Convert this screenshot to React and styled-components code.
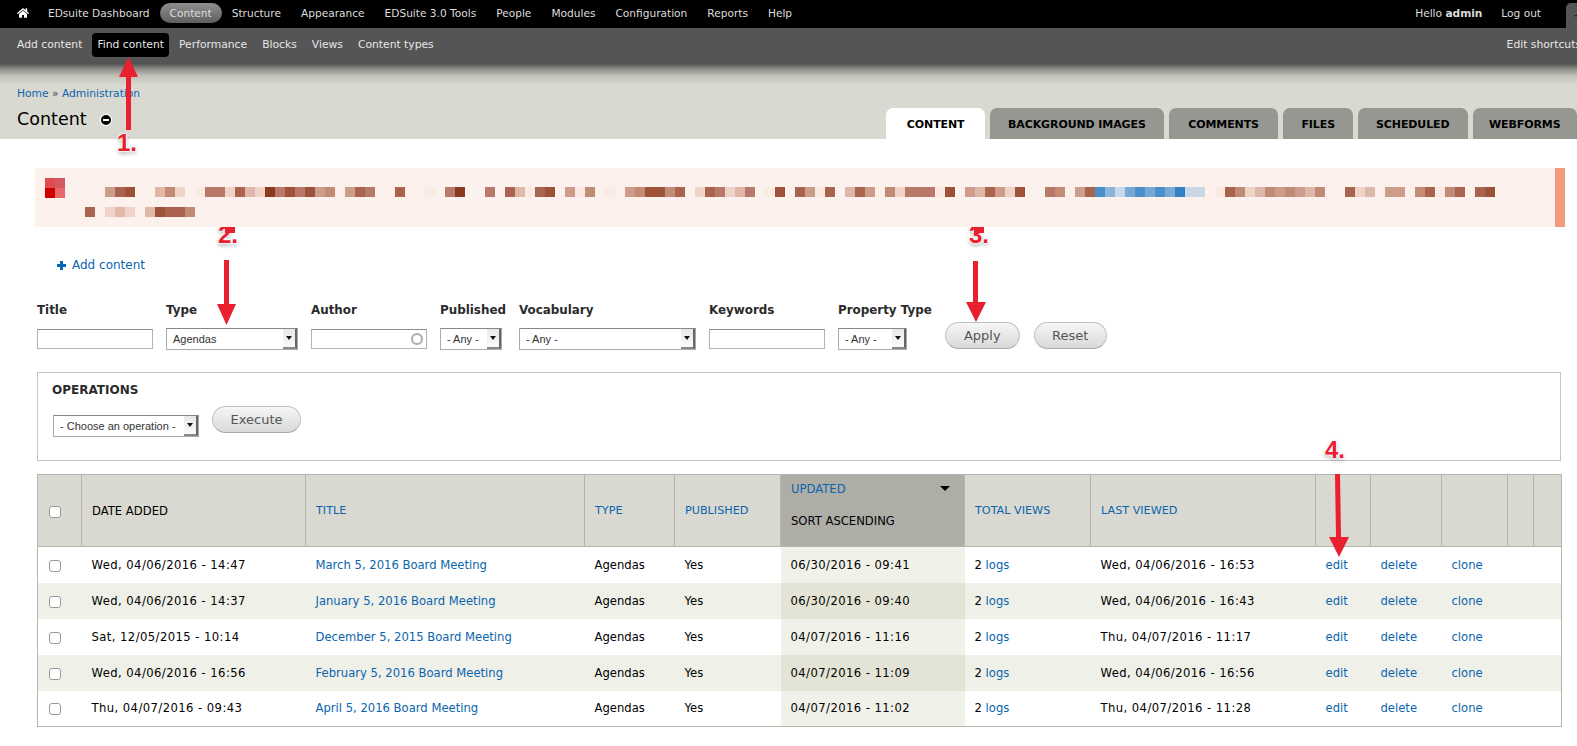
import React from "react";
import styled, { createGlobalStyle } from "styled-components";
import { FaHome } from "react-icons/fa";

const GlobalStyle = createGlobalStyle`
  html, body {
    margin: 0;
    padding: 0;
    background: #fff;
  }
  body {
    font-family: "DejaVu Sans", sans-serif;
    font-size: 10.6px;
    color: #000;
  }
`;

const Page = styled.div`
  position: relative;
  width: 1577px;
  height: 746px;
  overflow: hidden;
`;

const TopBar = styled.div`
  box-sizing: border-box;
  height: 28px;
  padding-bottom: 2px;
  background: #000;
  display: flex;
  align-items: center;
  justify-content: space-between;
  color: #ddd;
`;

const NavList = styled.div`
  display: flex;
  align-items: center;
`;

const HomeLink = styled.div`
  width: 48px;
  padding-left: 17px;
  box-sizing: border-box;
  display: flex;
  color: #fff;
  font-size: 12px;
`;

const NavItem = styled.span`
  height: 20px;
  line-height: 20px;
  padding: 0 ${(p) => (p.$first ? "10px 0 0" : "10px")};
  border-radius: 10px;
  white-space: nowrap;
  background: ${(p) => (p.$active ? "linear-gradient(#8e8e8e, #5f5f5f)" : "none")};
`;

const UserBox = styled.div`
  display: flex;
  align-items: center;
  height: 28px;
`;

const Hello = styled.span`
  margin-right: 19px;
`;

const Logout = styled.span`
  margin-right: 25px;
`;

const ShortcutToggle = styled.div`
  width: 11px;
  height: 25px;
  margin-top: 5px;
  background: #555;
  border-radius: 5px 0 0 0;
  display: flex;
  align-items: center;
  padding-left: 8px;
  box-sizing: border-box;
  &::after {
    content: "";
    border: 2px solid transparent;
    border-top-color: #222;
    margin-top: 2px;
  }
`;

const SubBar = styled.div`
  box-sizing: border-box;
  height: 35px;
  background: #555;
  display: flex;
  align-items: center;
  justify-content: space-between;
  color: #e6e6e6;
  font-size: 10.75px;
  padding: 0 0 2px 12px;
`;

const SubItem = styled.span`
  height: 24px;
  line-height: 24px;
  padding: 0 5px;
  margin-right: 5px;
  border-radius: 4px;
  white-space: nowrap;
  background: ${(p) => (p.$active ? "#000" : "none")};
`;

const EditShortcuts = styled.span`
  white-space: nowrap;
  margin-right: -4px;
`;

const Header = styled.div`
  height: 76px;
  display: flex;
  justify-content: space-between;
  background: linear-gradient(180deg, #4c4c4c 0, #8e8e88 6px, #c2c2ba 13px, #d9d9d1 22px);
`;

const HeaderText = styled.div`
  padding: 22px 0 0 17px;
`;

const Breadcrumb = styled.div`
  line-height: 18px;
  font-size: 10.7px;
  color: #444;
`;

const Link = styled.span`
  color: #0a64ae;
`;

const PageTitle = styled.h1`
  margin: 4px 0 0;
  font-size: 17.5px;
  font-weight: normal;
  line-height: 24px;
  display: flex;
  align-items: center;
  gap: 14px;
`;

const MinusDot = styled.span`
  width: 10px;
  height: 10px;
  border-radius: 50%;
  background: #000;
  display: flex;
  align-items: center;
  justify-content: center;
  margin-top: 2px;
  box-shadow: 0 0 0 1px #fff;
  &::after {
    content: "";
    width: 6px;
    height: 2px;
    background: #fff;
  }
`;

const Tabs = styled.div`
  display: flex;
  gap: 5px;
  align-self: flex-end;
  flex-shrink: 0;
`;

const Tab = styled.div`
  height: 31px;
  line-height: 34px;
  padding: 0 ${(p) => p.$pad || 18}px;
  font-size: 11px;
  font-weight: bold;
  letter-spacing: -0.1px;
  white-space: nowrap;
  border-radius: 7px 7px 0 0;
  background: ${(p) => (p.$active ? "#fff" : "#959790")};
  color: #000;
`;

const MessageBox = styled.div`
  position: relative;
  z-index: 2;
  margin: 29px 12px 0 35px;
  height: 59px;
  background: #fdf1ee;
  border-right: 10px solid #f49b7f;
  display: flex;
  padding-left: 10px;
`;

const MessageIcon = styled.div`
  display: grid;
  grid-template-columns: 10px 10px;
  grid-auto-rows: 10px;
  margin-top: 10px;
  height: 20px;
`;

const MessageLines = styled.div`
  margin-left: 20px;
  padding-top: 19px;
  display: flex;
  flex-direction: column;
  gap: 10px;
`;

const MosaicRow = styled.div`
  display: flex;
  height: 10px;
  margin-left: ${(p) => p.$indent}px;
`;

const MosaicCell = styled.i`
  display: block;
  width: 10px;
  height: 10px;
`;

const Main = styled.div`
  padding: 0 16px 0 37px;
`;

const AddContent = styled.div`
  margin: 28px 0 0 20px;
  line-height: 20px;
  font-size: 12px;
  display: flex;
  align-items: center;
  gap: 6px;
  color: #0a64ae;
`;

const PlusIcon = styled.span`
  position: relative;
  width: 9px;
  height: 9px;
  &::before,
  &::after {
    content: "";
    position: absolute;
    background: #0a64ae;
  }
  &::before {
    left: 3px;
    top: 0;
    width: 3px;
    height: 9px;
  }
  &::after {
    left: 0;
    top: 3px;
    width: 9px;
    height: 3px;
  }
`;

const FilterRow = styled.div`
  display: flex;
  gap: 13px;
  margin-top: 26px;
`;

const Field = styled.div`
  display: flex;
  flex-direction: column;
  align-items: flex-start;
  gap: 10px;
`;

const FieldLabel = styled.label`
  font-size: 11.9px;
  font-weight: bold;
  line-height: 18px;
  color: #2b2b2b;
  white-space: nowrap;
`;

const InputWrap = styled.div`
  position: relative;
  height: 20px;
`;

const TextInput = styled.input`
  display: block;
  box-sizing: border-box;
  width: 116px;
  height: 20px;
  padding: 0 4px;
  background: #fff;
  border: 1px solid #b4b4b4;
  border-top-color: #8c8c8c;
  outline: none;
`;

const Throbber = styled.span`
  position: absolute;
  right: 4px;
  top: 4px;
  width: 8px;
  height: 8px;
  border: 2px solid #aaa;
  border-radius: 50%;
`;

const SelectBox = styled.div`
  box-sizing: border-box;
  width: ${(p) => p.$width}px;
  height: 22px;
  margin-top: -1px;
  border: 1px solid #aaa;
  border-top-color: #888;
  display: flex;
  background: #fff;
  font-family: "Liberation Sans", sans-serif;
  font-size: 11px;
  color: #333;
`;

const SelectText = styled.span`
  flex: 1;
  padding-left: 6px;
  line-height: 20px;
  white-space: nowrap;
`;

const SelectArrow = styled.span`
  width: 14px;
  box-sizing: border-box;
  display: flex;
  align-items: center;
  justify-content: center;
  background: linear-gradient(#e8e8e8, #fafafa);
  border-right: 2px solid #666;
  border-bottom: 2px solid #888;
  &::after {
    content: "";
    border-style: solid;
    border-width: 4px 3px 0;
    border-color: #111 transparent transparent;
  }
`;

const PillButton = styled.div`
  box-sizing: border-box;
  width: ${(p) => p.$width}px;
  height: 27px;
  border: 1px solid #c0c0c0;
  border-bottom-color: #aaa;
  border-radius: 14px;
  background: linear-gradient(#f6f6f6, #d9d9d9);
  color: #555;
  font-size: 13px;
  line-height: 25px;
  text-align: center;
`;

const FilterButtons = styled.div`
  display: flex;
  gap: 14px;
  align-self: flex-end;
  margin: 0 0 1px 0;
`;

const OperationsBox = styled.div`
  box-sizing: border-box;
  height: 89px;
  margin-top: 22px;
  border: 1px solid #c4c4c4;
  padding: 9px 14px;
`;

const OperationsTitle = styled.div`
  font-size: 12px;
  font-weight: bold;
  line-height: 16px;
  color: #2b2b2b;
`;

const OperationsRow = styled.div`
  display: flex;
  gap: 13px;
  margin: 8px 0 0 1px;
  align-items: flex-start;
`;

const SelectOffset = styled.div`
  margin-top: 10px;
`;

const Table = styled.table`
  margin-top: 13px;
  width: 1524px;
  table-layout: fixed;
  border-collapse: collapse;
  border: 1px solid #b5b5ad;
  font-size: 11.6px;
`;

const HeadRow = styled.tr`
  height: 72px;
  background: #d9d9d1;
  border-bottom: 1px solid #b5b5ad;
`;

const HeadCell = styled.th`
  padding: 0 10px;
  font-weight: normal;
  font-size: ${(p) => (p.$link ? "11.2px" : "11.6px")};
  text-align: left;
  border-left: 1px solid #b5b5ad;
  color: ${(p) => (p.$link ? "#0a64ae" : "#000")};
  background: ${(p) => (p.$sorted ? "#aeaea6" : "none")};
  &:first-child {
    border-left: 0;
    padding-left: 11px;
  }
`;

const SortedHead = styled.div`
  display: flex;
  flex-direction: column;
  gap: 18px;
  padding-bottom: 12px;
`;

const SortedTop = styled.div`
  display: flex;
  justify-content: space-between;
  align-items: center;
  color: #0a64ae;
  &::after {
    content: "";
    margin-right: 4px;
    border-style: solid;
    border-width: 5px 5px 0;
    border-color: #000 transparent transparent;
  }
`;

const Row = styled.tr`
  height: 36px;
  background: ${(p) => (p.$even ? "#eff0e8" : "#fff")};
`;

const Cell = styled.td`
  padding: 0 10px;
  white-space: nowrap;
  letter-spacing: ${(p) => (p.$date ? "0.43px" : "0")};
  background: ${(p) => (p.$sorted ? (p.$even ? "#e3e4d5" : "#f0f1e9") : "none")};
  &:first-child {
    padding-left: 11px;
  }
`;

const CheckBox = styled.span`
  display: block;
  box-sizing: border-box;
  width: 12px;
  height: 12px;
  margin-top: 2px;
  background: #fff;
  border: 1px solid #999;
  border-radius: 3px;
`;

const ArrowLayer = styled.svg`
  position: absolute;
  left: 0;
  top: 0;
  z-index: 3;
  pointer-events: none;
`;

const StepNumber = styled.span`
  position: absolute;
  left: ${(p) => p.$x}px;
  top: ${(p) => p.$y}px;
  z-index: ${(p) => (p.$under ? 1 : 3)};
  font-family: "Liberation Sans", sans-serif;
  font-size: 24px;
  font-weight: bold;
  line-height: 26px;
  color: #e8202f;
  text-shadow: 0 0 2px #fff, 0 0 2px #fff, 0 0 3px #fff, 0 0 3px #fff, 0 2px 4px rgba(0, 0, 0, 0.45);
`;

const palette = ["", "#fbe9e3", "#efd3c9", "#e0b8a9", "#cd9c8a", "#c28b76", "#b9796a", "#a9634e", "#9e5239", "#8b3a1f"];
const blues = { a: "#c8d8e6", b: "#8fb4da", c: "#78a8d4", d: "#4a90cc", e: "#2f84c6" };

const cellColor = (c) => blues[c] || palette[Number(c)] || "transparent";

const firstLine =
  "478..352.16627329686845.476..7..1.69..6." +
  "73178.415.1.458857.276236.18.7417.374.52" +
  "66618.437428..65.47dbacdcdceaa.1752354543" +
  "5..723.44.57157.78";
const secondLine = "7.232.38775";
const iconCells = ["#e04a50", "#d05a60", "#cc0000", "#e8676a"];

const Mosaic = ({ data, indent }) => (
  <MosaicRow $indent={indent}>
    {data.split("").map((c, i) => (
      <MosaicCell key={i} style={{ background: cellColor(c) }} />
    ))}
  </MosaicRow>
);

const Select = ({ width, children }) => (
  <SelectBox $width={width}>
    <SelectText>{children}</SelectText>
    <SelectArrow />
  </SelectBox>
);

const rows = [
  ["Wed, 04/06/2016 - 14:47", "March 5, 2016 Board Meeting", "06/30/2016 - 09:41", "Wed, 04/06/2016 - 16:53"],
  ["Wed, 04/06/2016 - 14:37", "January 5, 2016 Board Meeting", "06/30/2016 - 09:40", "Wed, 04/06/2016 - 16:43"],
  ["Sat, 12/05/2015 - 10:14", "December 5, 2015 Board Meeting", "04/07/2016 - 11:16", "Thu, 04/07/2016 - 11:17"],
  ["Wed, 04/06/2016 - 16:56", "February 5, 2016 Board Meeting", "04/07/2016 - 11:09", "Wed, 04/06/2016 - 16:56"],
  ["Thu, 04/07/2016 - 09:43", "April 5, 2016 Board Meeting", "04/07/2016 - 11:02", "Thu, 04/07/2016 - 11:28"],
];

const columnWidths = [44, 224, 279, 90, 106, 184, 126, 225, 55, 71, 66, 26, 28];

const App = () => {
  return (
    <Page>
      <GlobalStyle />
      <TopBar>
        <NavList>
          <HomeLink>
            <FaHome />
          </HomeLink>
          <NavItem $first>EDsuite Dashboard</NavItem>
          <NavItem $active>Content</NavItem>
          <NavItem>Structure</NavItem>
          <NavItem>Appearance</NavItem>
          <NavItem>EDSuite 3.0 Tools</NavItem>
          <NavItem>People</NavItem>
          <NavItem>Modules</NavItem>
          <NavItem>Configuration</NavItem>
          <NavItem>Reports</NavItem>
          <NavItem>Help</NavItem>
        </NavList>
        <UserBox>
          <Hello>
            Hello <strong>admin</strong>
          </Hello>
          <Logout>Log out</Logout>
          <ShortcutToggle />
        </UserBox>
      </TopBar>
      <SubBar>
        <NavList>
          <SubItem>Add content</SubItem>
          <SubItem $active>Find content</SubItem>
          <SubItem>Performance</SubItem>
          <SubItem>Blocks</SubItem>
          <SubItem>Views</SubItem>
          <SubItem>Content types</SubItem>
        </NavList>
        <EditShortcuts>Edit shortcuts</EditShortcuts>
      </SubBar>
      <Header>
        <HeaderText>
          <Breadcrumb>
            <Link>Home</Link> » <Link>Administration</Link>
          </Breadcrumb>
          <PageTitle>
            Content <MinusDot />
          </PageTitle>
        </HeaderText>
        <Tabs>
          <Tab $active $pad={20.5}>CONTENT</Tab>
          <Tab>BACKGROUND IMAGES</Tab>
          <Tab $pad={19.5}>COMMENTS</Tab>
          <Tab>FILES</Tab>
          <Tab>SCHEDULED</Tab>
          <Tab $pad={16.5}>WEBFORMS</Tab>
        </Tabs>
      </Header>

      <MessageBox>
        <MessageIcon>
          {iconCells.map((c) => (
            <MosaicCell key={c} style={{ background: c }} />
          ))}
        </MessageIcon>
        <MessageLines>
          <Mosaic data={firstLine} indent={20} />
          <Mosaic data={secondLine} indent={0} />
        </MessageLines>
      </MessageBox>

      <Main>
        <AddContent>
          <PlusIcon />
          Add content
        </AddContent>

        <FilterRow>
          <Field>
            <FieldLabel>Title</FieldLabel>
            <TextInput readOnly />
          </Field>
          <Field>
            <FieldLabel>Type</FieldLabel>
            <Select width={132}>Agendas</Select>
          </Field>
          <Field>
            <FieldLabel>Author</FieldLabel>
            <InputWrap>
              <TextInput readOnly />
              <Throbber />
            </InputWrap>
          </Field>
          <Field>
            <FieldLabel>Published</FieldLabel>
            <Select width={62}>- Any -</Select>
          </Field>
          <Field>
            <FieldLabel>Vocabulary</FieldLabel>
            <Select width={177}>- Any -</Select>
          </Field>
          <Field>
            <FieldLabel>Keywords</FieldLabel>
            <TextInput readOnly />
          </Field>
          <Field>
            <FieldLabel>Property Type</FieldLabel>
            <Select width={69}>- Any -</Select>
          </Field>
          <FilterButtons>
            <PillButton $width={75}>Apply</PillButton>
            <PillButton $width={73}>Reset</PillButton>
          </FilterButtons>
        </FilterRow>

        <OperationsBox>
          <OperationsTitle>OPERATIONS</OperationsTitle>
          <OperationsRow>
            <SelectOffset>
              <Select width={146}>- Choose an operation -</Select>
            </SelectOffset>
            <PillButton $width={89}>Execute</PillButton>
          </OperationsRow>
        </OperationsBox>

        <Table>
          <colgroup>
            {columnWidths.map((w, i) => (
              <col key={i} width={w} />
            ))}
          </colgroup>
          <thead>
            <HeadRow>
              <HeadCell>
                <CheckBox />
              </HeadCell>
              <HeadCell>DATE ADDED</HeadCell>
              <HeadCell $link>TITLE</HeadCell>
              <HeadCell $link>TYPE</HeadCell>
              <HeadCell $link>PUBLISHED</HeadCell>
              <HeadCell $sorted>
                <SortedHead>
                  <SortedTop>UPDATED</SortedTop>
                  <div>SORT ASCENDING</div>
                </SortedHead>
              </HeadCell>
              <HeadCell $link>TOTAL VIEWS</HeadCell>
              <HeadCell $link>LAST VIEWED</HeadCell>
              <HeadCell />
              <HeadCell />
              <HeadCell />
              <HeadCell />
              <HeadCell />
            </HeadRow>
          </thead>
          <tbody>
            {rows.map(([added, title, updated, viewed], i) => (
              <Row key={title} $even={i % 2 === 1}>
                <Cell>
                  <CheckBox />
                </Cell>
                <Cell $date>{added}</Cell>
                <Cell>
                  <Link>{title}</Link>
                </Cell>
                <Cell>Agendas</Cell>
                <Cell>Yes</Cell>
                <Cell $date $sorted $even={i % 2 === 1}>
                  {updated}
                </Cell>
                <Cell>
                  2 <Link>logs</Link>
                </Cell>
                <Cell $date>{viewed}</Cell>
                <Cell>
                  <Link>edit</Link>
                </Cell>
                <Cell>
                  <Link>delete</Link>
                </Cell>
                <Cell>
                  <Link>clone</Link>
                </Cell>
                <Cell />
                <Cell />
              </Row>
            ))}
          </tbody>
        </Table>
      </Main>

      <StepNumber $x={117} $y={130}>1.</StepNumber>
      <StepNumber $x={218} $y={222} $under>2.</StepNumber>
      <StepNumber $x={969} $y={222} $under>3.</StepNumber>
      <StepNumber $x={1325} $y={437}>4.</StepNumber>

      <ArrowLayer width="1577" height="746" viewBox="0 0 1577 746">
        <g fill="#e8202f">
          <path d="M126 130 L131 130 L131 77 L138 77 L128.5 57 L119 77 L126 77 Z" />
          <path d="M224 260 L229 260 L229 304 L236 304 L226.5 325 L217 304 L224 304 Z" />
          <path d="M973 261 L978 261 L978 302 L986 302 L976 322 L966 302 L973 302 Z" />
          <path d="M1335 474 L1340 474 L1341 537 L1349 537 L1339 557 L1329 537 L1336 537 Z" />
        </g>
        <rect x="225" y="227" width="10" height="6" fill="#e8202f" />
        <rect x="974" y="227" width="10" height="6" fill="#e8202f" />
      </ArrowLayer>
    </Page>
  );
};

export default App;
